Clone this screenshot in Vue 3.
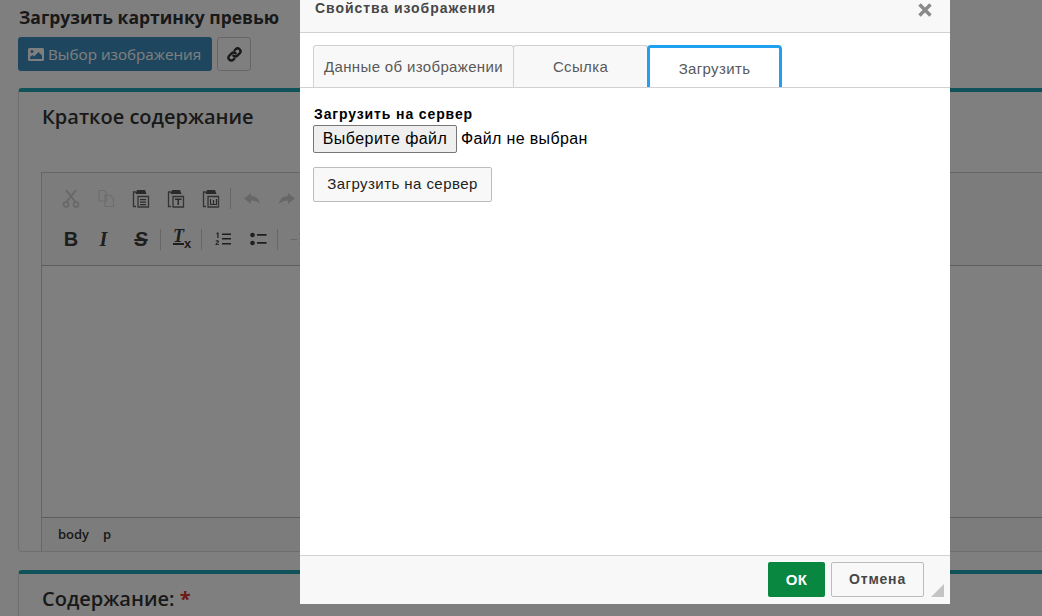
<script setup>
const tabs = [
  { label: 'Данные об изображении', width: 201 },
  { label: 'Ссылка', width: 135 },
  { label: 'Загрузить', width: 135, active: true }
]
</script>

<template>
  <div class="page">
    <h4 class="page-title">Загрузить картинку превью</h4>
    <div class="picker">
      <button class="btn-pick" type="button">
        <svg class="pick-icon" viewBox="0 0 16 13" width="16" height="13">
          <path fill="currentColor" fill-rule="evenodd" d="M1.500 0h13A1.500 1.500 0 0 1 16 1.500v10a1.500 1.500 0 0 1-1.500 1.500h-13A1.500 1.500 0 0 1 0 11.500v-10A1.500 1.500 0 0 1 1.500 0zM4 2a1.500 1.500 0 1 0 0 3 1.500 1.500 0 0 0 0-3zM2 11h12V7.500L10.500 4 6 8.500 4.500 7 2 9z" />
        </svg>
        Выбор изображения
      </button>
      <button class="btn-link" type="button">
        <svg viewBox="0 0 16 16" width="15" height="15">
          <path fill="none" stroke="#333" stroke-width="2.500" stroke-linecap="round" d="M6.800 9.200a3 3 0 0 0 4.300 0l2.400-2.400a3 3 0 0 0-4.300-4.300l-1 1M9.200 6.800a3 3 0 0 0-4.300 0L2.500 9.200a3 3 0 0 0 4.300 4.300l1-1" />
        </svg>
      </button>
    </div>

    <section class="card">
      <h4 class="card-title">Краткое содержание</h4>
      <div class="editor">
        <div class="toolbar">
          <div class="tool-row">
            <svg class="tool" viewBox="0 0 18 19"><path fill="none" stroke="#cfcfcf" stroke-width="2" d="M4 1l9.500 12M14 1L4.500 13" /><circle cx="4" cy="15.500" r="2.500" fill="none" stroke="#cfcfcf" stroke-width="1.700" /><circle cx="14" cy="15.500" r="2.500" fill="none" stroke="#cfcfcf" stroke-width="1.700" /></svg>
            <svg class="tool" viewBox="0 0 18 19"><path fill="none" stroke="#dcdcdc" stroke-width="1.200" d="M2 1.500h5.500l2 2V12H2zM8 6h5l3.500 3.500v8H8z" /></svg>
            <svg class="tool" viewBox="0 0 18 19"><path fill="none" stroke="#666" stroke-width="1.300" d="M4 3H1.500v14.500H4M6 7.500h10.500V18H6z" /><path fill="#555" d="M5 1h8l1.500 4h-11zM8 10h6v1.200H8zm0 2.500h6v1.200H8zm0 2.500h6v1.200H8z" /></svg>
            <svg class="tool" viewBox="0 0 18 19"><path fill="none" stroke="#666" stroke-width="1.300" d="M4 3H1.500v14.500H4M6 7.500h10.500V18H6z" /><path fill="#555" d="M5 1h8l1.500 4h-11zM8 9.500h6.500v1.500h-2.500v5h-1.500v-5H8z" /></svg>
            <svg class="tool" viewBox="0 0 18 19"><path fill="none" stroke="#666" stroke-width="1.300" d="M4 3H1.500v14.500H4M6 7.500h10.500V18H6z" /><path fill="#555" d="M5 1h8l1.500 4h-11z" /><path fill="none" stroke="#555" stroke-width="1.200" d="M8.500 10v5.500h6V10M11.500 11v4.500" /></svg>
            <span class="sep"></span>
            <svg class="tool" viewBox="0 0 18 19"><path fill="#cfcfcf" d="M8 4L1 9.500 8 15v-3.500c3.500 0 6.500 1 9 3.500-.5-5-4-8-9-8z" /></svg>
            <svg class="tool" viewBox="0 0 18 19"><path fill="#cfcfcf" d="M10 4l7 5.500L10 15v-3.500c-3.500 0-6.500 1-9 3.500 .5-5 4-8 9-8z" /></svg>
          </div>
          <div class="tool-row">
            <span class="glyph bold">B</span>
            <span class="glyph italic">I</span>
            <span class="glyph strike">S</span>
            <span class="sep"></span>
            <span class="glyph clear"><span class="clear-t">T</span><small>x</small></span>
            <span class="sep"></span>
            <svg class="tool" viewBox="0 0 18 19"><path fill="#3c3c3c" d="M8 3.500h9v1.600H8zM8 8h9v1.600H8zM8 13h9v1.600H8z" /><path fill="#3c3c3c" d="M3 2.500h1.500v5.500h-1.200V3.800l-1 .4zM1.500 11c.7-1.200 3.500-1.200 3.500.6 0 1.200-1.700 1.700-2.300 2.600H5v.9H1.300c0-2 2.500-2.500 2.500-3.400 0-.8-1.200-.7-1.600 0z" /></svg>
            <svg class="tool" viewBox="0 0 18 19"><circle cx="3.500" cy="5" r="2.300" fill="#3c3c3c" /><circle cx="3.500" cy="13" r="2.300" fill="#3c3c3c" /><path fill="#3c3c3c" d="M8 4h9.500v1.800H8zM8 12h9.500v1.800H8z" /></svg>
            <span class="sep"></span>
            <svg class="tool" viewBox="0 0 18 19"><path fill="#cfcfcf" d="M1 9h6v1H1zM9 3h8v1H9zm0 5h8v1H9zm0 5h8v1H9z" /></svg>
          </div>
        </div>
        <div class="edit-area"></div>
        <div class="edit-path"><span>body</span><span>p</span></div>
      </div>
    </section>

    <section class="card card-next">
      <h4 class="card-title">Содержание: <span class="req">*</span></h4>
    </section>
  </div>

  <div class="backdrop"></div>

  <div class="dialog">
    <header class="dialog-head">
      <span class="dialog-title">Свойства изображения</span>
      <svg class="dialog-close" viewBox="0 0 14 14" width="14" height="14">
        <path fill="none" stroke="#8a8a8a" stroke-width="3.400" d="M1.500 1.500l11 11M12.500 1.500l-11 11" />
      </svg>
    </header>

    <nav class="tabs">
      <div
        v-for="tab in tabs"
        :key="tab.label"
        class="tab"
        :class="{ active: tab.active }"
        :style="{ width: tab.width + 'px' }"
      >
        {{ tab.label }}
      </div>
    </nav>

    <main class="dialog-body">
      <label class="upload-label">Загрузить на сервер</label>
      <div class="file-row">
        <button class="file-btn" type="button">Выберите файл</button>
        <span class="file-name">Файл не выбран</span>
      </div>
      <button class="send-btn" type="button">Загрузить на сервер</button>
    </main>

    <footer class="dialog-foot">
      <button class="ok-btn" type="button">ОК</button>
      <button class="cancel-btn" type="button">Отмена</button>
      <span class="resizer"></span>
    </footer>
  </div>
</template>

<style>
html,
body {
  margin: 0;
  overflow: hidden;
}
</style>

<style scoped>
.page {
  box-sizing: border-box;
  width: 1042px;
  height: 616px;
  padding: 0 0 0 18px;
  overflow: hidden;
  background: #fff;
  font-family: "Open Sans", sans-serif;
  color: #333;
}

.page-title {
  margin: 0;
  padding: 6px 0 0 1px;
  font-size: 17.5px;
  line-height: 23px;
  font-weight: 700;
}

.picker {
  display: flex;
  gap: 5px;
  margin-top: 8px;
}

.btn-pick {
  display: flex;
  align-items: center;
  gap: 4px;
  width: 194px;
  height: 34px;
  padding: 0 0 0 10px;
  border: 0;
  border-radius: 3px;
  background: #3c8dbc;
  color: #fff;
  font: 400 15.2px "Open Sans", sans-serif;
  white-space: nowrap;
}

.btn-link {
  display: flex;
  align-items: center;
  justify-content: center;
  width: 34px;
  height: 34px;
  padding: 0;
  border: 1px solid #ccc;
  border-radius: 3px;
  background: #fff;
}

.card {
  box-sizing: border-box;
  height: 464px;
  margin-top: 17px;
  margin-right: -20px;
  padding-left: 22px;
  border: 1px solid #ddd;
  border-top: 4px solid #20a4b4;
  border-radius: 4px;
  background: #fff;
}

.card-next {
  margin-top: 18px;
}

.card-title {
  margin: 0;
  padding: 12px 0 0 1px;
  font-size: 20px;
  line-height: 26px;
  font-weight: 600;
}

.req {
  color: #d9322e;
  font-weight: 700;
}

.editor {
  box-sizing: border-box;
  height: 379px;
  margin-top: 42px;
  border-left: 1px solid #ccc;
  border-top: 1px solid #ccc;
}

.toolbar {
  box-sizing: border-box;
  height: 93px;
  padding: 8px 0 0 20px;
  border-bottom: 1px solid #bbb;
  background: #f8f8f8;
}

.tool-row {
  display: flex;
  align-items: center;
  gap: 17px;
  height: 34px;
  margin-bottom: 7px;
}

.tool {
  width: 18px;
  height: 19px;
  flex: none;
}

.sep {
  flex: none;
  width: 1px;
  height: 21px;
  margin: 0 -5px 0 -7px;
  background: #ccc;
}

.glyph {
  flex: none;
  width: 18px;
  text-align: center;
  font: 700 20px "Liberation Sans", sans-serif;
  color: #3c3c3c;
}

.italic {
  box-sizing: border-box;
  padding-right: 5px;
  font-family: "Liberation Serif", serif;
  font-style: italic;
}

.strike {
  font-style: italic;
  text-decoration: line-through;
}

.clear {
  display: flex;
  align-items: flex-start;
  font-family: "Liberation Serif", serif;
  font-size: 18px;
  font-style: italic;
  line-height: 19px;
}

.clear-t {
  margin-top: 2px;
  border-bottom: 2px solid #3c3c3c;
  line-height: 14px;
}

.clear small {
  margin-top: 9px;
  font: 700 13px "Liberation Sans", sans-serif;
}

.edit-area {
  height: 251px;
  background: #fff;
}

.edit-path {
  display: flex;
  gap: 14px;
  height: 33px;
  padding-left: 16px;
  border-top: 1px solid #bbb;
  background: #f8f8f8;
  font-size: 13px;
  line-height: 33px;
  font-weight: 600;
}

.backdrop {
  position: absolute;
  inset: 0;
  background: rgba(0, 0, 0, 0.5);
}

.dialog {
  position: absolute;
  top: 0;
  left: 300px;
  display: flex;
  flex-direction: column;
  width: 650px;
  height: 604px;
  background: #fff;
  font-family: "Liberation Sans", Arial, sans-serif;
}

.dialog-head {
  box-sizing: border-box;
  display: flex;
  align-items: flex-start;
  justify-content: space-between;
  height: 33px;
  padding: 0 18px 0 15px;
  border-bottom: 1px solid #d1d1d1;
  background: #f8f8f8;
}

.dialog-title {
  margin-top: 1px;
  font-size: 14px;
  line-height: 15px;
  font-weight: 700;
  letter-spacing: 0.95px;
  color: #474747;
}

.dialog-close {
  margin-top: 3px;
}

.tabs {
  box-sizing: border-box;
  display: flex;
  height: 55px;
  padding: 12px 0 0 13px;
  border-bottom: 1px solid #d1d1d1;
}

.tab {
  box-sizing: border-box;
  flex: none;
  height: 42px;
  border: 1px solid #d1d1d1;
  border-bottom: 0;
  border-radius: 3px 3px 0 0;
  background: #f8f8f8;
  color: #595959;
  font-size: 15px;
  line-height: 42px;
  text-align: center;
  letter-spacing: 0.35px;
}

.tab + .tab {
  margin-left: -1px;
}

.tab.active {
  border: 3px solid #1fa0f0;
  border-bottom: 0;
  border-radius: 4px 4px 0 0;
  background: #fff;
  line-height: 42px;
}

.dialog-body {
  flex: 1;
  padding: 17px 13px 0;
}

.upload-label {
  display: block;
  padding-left: 1px;
  color: #000;
  font-size: 14px;
  line-height: 18px;
  font-weight: 700;
  letter-spacing: 0.88px;
}

.file-row {
  display: flex;
  align-items: center;
  gap: 4px;
  margin-top: 2px;
}

.file-btn {
  box-sizing: border-box;
  width: 144px;
  height: 28px;
  padding: 0;
  border: 1px solid #767676;
  border-radius: 2px;
  background: #efefef;
  color: #000;
  font: 400 16px "Liberation Sans", Arial, sans-serif;
  letter-spacing: 0.45px;
}

.file-name {
  color: #000;
  font-size: 16px;
  letter-spacing: 0.35px;
}

.send-btn {
  box-sizing: border-box;
  display: block;
  width: 179px;
  height: 35px;
  margin-top: 14px;
  padding: 0 0 2px;
  border: 1px solid #bcbcbc;
  border-radius: 2px;
  background: #f8f8f8;
  color: #222;
  font: 400 15px "Liberation Sans", Arial, sans-serif;
  letter-spacing: 0.44px;
}

.dialog-foot {
  box-sizing: border-box;
  position: relative;
  display: flex;
  justify-content: flex-end;
  gap: 6px;
  height: 49px;
  padding: 6px 26px 0 0;
  border-top: 1px solid #d1d1d1;
  background: #f8f8f8;
}

.ok-btn {
  box-sizing: border-box;
  width: 57px;
  height: 35px;
  padding: 0 0 1px;
  border: 0;
  border-radius: 2px;
  background: #09863f;
  color: #fff;
  font: 700 15px "Liberation Sans", Arial, sans-serif;
  letter-spacing: 0.3px;
}

.cancel-btn {
  box-sizing: border-box;
  width: 93px;
  height: 35px;
  padding: 0 0 1px;
  border: 1px solid #bcbcbc;
  border-radius: 2px;
  background: #f8f8f8;
  color: #474747;
  font: 700 14px "Liberation Sans", Arial, sans-serif;
  letter-spacing: 0.8px;
}

.resizer {
  position: absolute;
  right: 6px;
  bottom: 7px;
  width: 0;
  height: 0;
  border-style: solid;
  border-width: 0 0 13px 13px;
  border-color: transparent transparent #c4c4c4 transparent;
}
</style>
